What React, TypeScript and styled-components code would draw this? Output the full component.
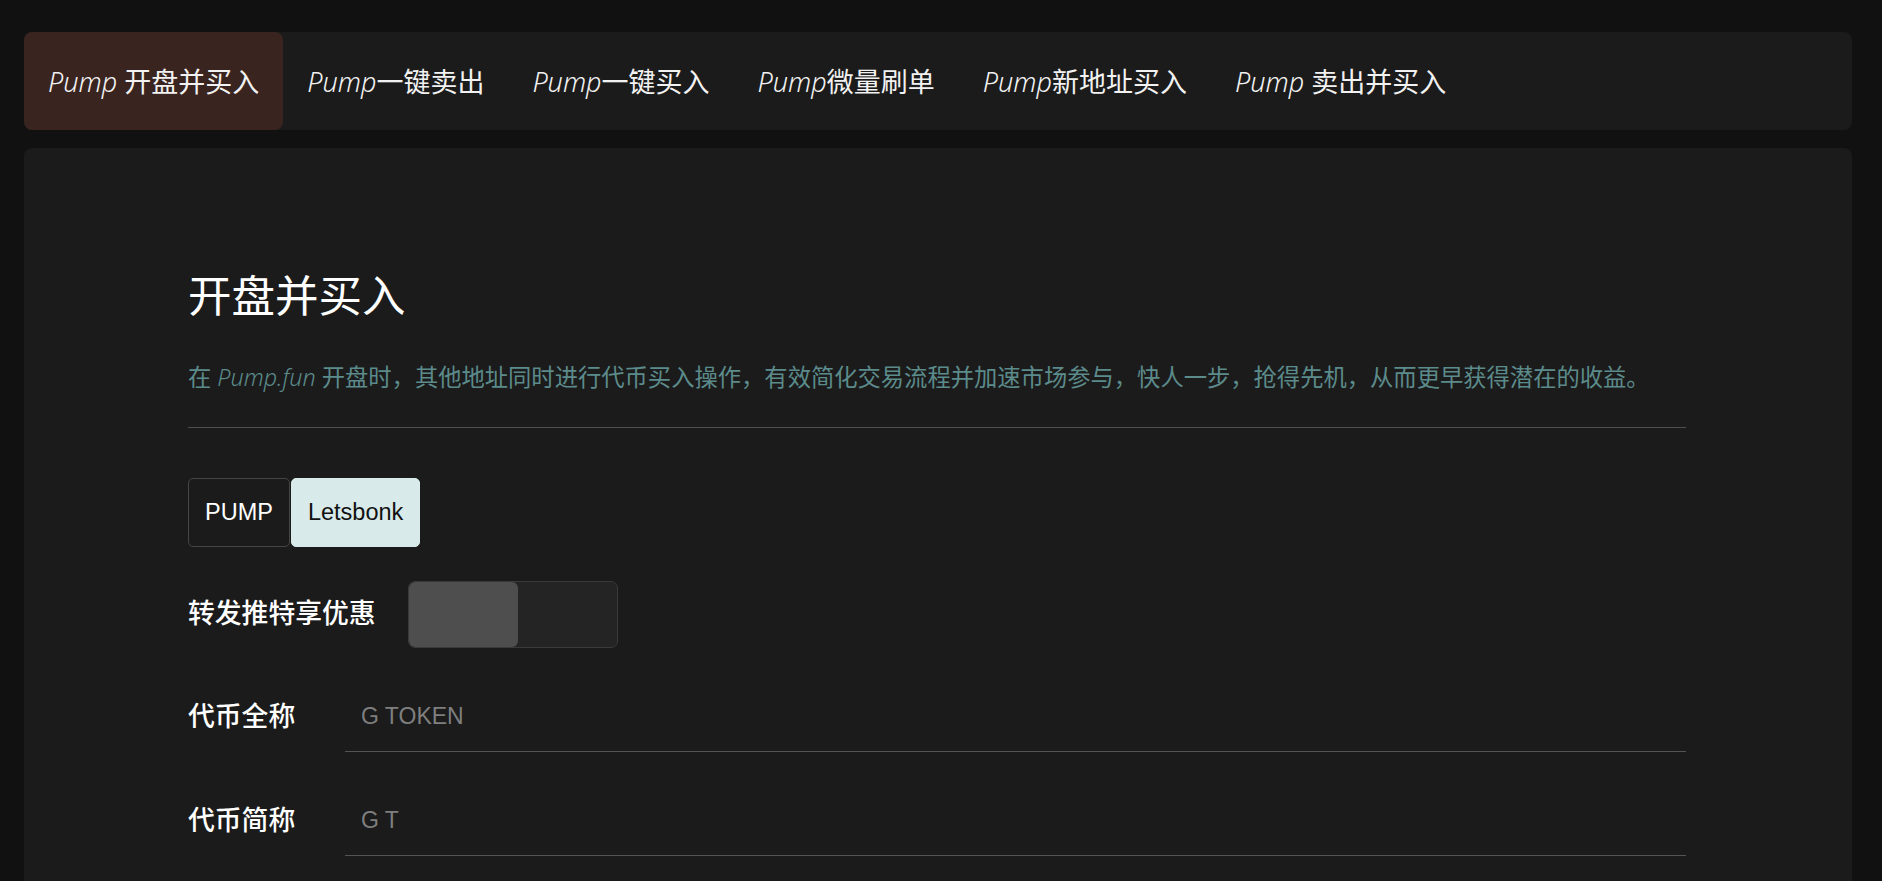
import React, { useState } from "react";
import styled, { createGlobalStyle } from "styled-components";

const GlobalStyle = createGlobalStyle`
  html, body {
    margin: 0;
    padding: 0;
    background: #111111;
  }
  body {
    font-family: "Noto Sans", "Noto Sans CJK SC", sans-serif;
    color: #ffffff;
  }
  * { box-sizing: border-box; }
`;

const Page = styled.div`
  padding: 32px 30px 0 24px;
  min-height: 881px;
`;

const TabBar = styled.nav`
  display: flex;
  align-items: stretch;
  height: 98px;
  background: #1b1b1b;
  border-radius: 8px;
`;

const Tab = styled.button<{ $active?: boolean }>`
  display: flex;
  align-items: center;
  padding: 0 24px 0 24px;
  border: none;
  border-radius: 8px;
  background: ${(p) => (p.$active ? "#392420" : "transparent")};
  color: #f2f2f2;
  font-family: "Noto Sans", "Noto Sans CJK SC", sans-serif;
  font-size: 27px;
  line-height: 1;
  cursor: pointer;
  white-space: pre;
  em { font-style: italic; font-weight: 300; }
`;

const Panel = styled.main`
  margin-top: 18px;
  background: #1b1b1b;
  border-radius: 8px;
  padding: 119px 166px 140px 164px;
`;

const Heading = styled.h1`
  margin: 0;
  font-family: "Noto Sans CJK SC", sans-serif;
  font-size: 43.5px;
  line-height: 53px;
  font-weight: 400;
  color: #ffffff;
`;

const Description = styled.p`
  margin: 39px 0 0;
  font-family: "Noto Sans", "Noto Sans CJK SC", sans-serif;
  font-size: 23.3px;
  line-height: 36px;
  color: #5b8b8b;
  em { font-style: italic; font-weight: 300; }
`;

const Divider = styled.hr`
  margin: 32px 0 0;
  border: none;
  border-top: 1px solid #4e4e4e;
`;

const Form = styled.div`
  margin-top: 50px;
  display: flex;
  flex-direction: column;
  gap: 34px;
`;

const Segment = styled.div`
  display: flex;
  gap: 1px;
`;

const SegButton = styled.button<{ $active?: boolean }>`
  height: 69px;
  padding: 0 16px;
  border: 1px solid ${(p) => (p.$active ? "#d8ebea" : "#454545")};
  border-radius: 5px;
  background: ${(p) => (p.$active ? "#d8ebea" : "transparent")};
  color: ${(p) => (p.$active ? "#111111" : "#ffffff")};
  font-family: "Liberation Sans", Arial, sans-serif;
  font-size: 23.5px;
  cursor: pointer;
`;

const Row = styled.div`
  display: flex;
  align-items: center;
`;

const Label = styled.label<{ $width?: number }>`
  flex: none;
  width: ${(p) => (p.$width ? `${p.$width}px` : "auto")};
  margin-right: ${(p) => (p.$width ? "0" : "32px")};
  padding-bottom: 6px;
  font-family: "Liberation Sans", "Noto Sans CJK SC", sans-serif;
  font-size: 26.8px;
  font-weight: 500;
  color: #ffffff;
`;

const Toggle = styled.button<{ $on?: boolean }>`
  display: flex;
  justify-content: ${(p) => (p.$on ? "flex-end" : "flex-start")};
  width: 210px;
  height: 67px;
  padding: 0;
  border: 1px solid #3a3a3a;
  border-radius: 7px;
  background: #242424;
  cursor: pointer;
  overflow: hidden;
`;

const Knob = styled.span`
  width: 109px;
  height: 100%;
  border-radius: 6px;
  background: #4e4e4e;
`;

const Input = styled.input`
  flex: 1;
  height: 70px;
  padding: 0 16px;
  border: none;
  border-bottom: 1px solid #545454;
  background: transparent;
  color: #ffffff;
  font-family: "Liberation Sans", Arial, sans-serif;
  font-size: 23px;
  outline: none;
  &::placeholder { color: #7f7f7f; }
`;

const tabs = [
  ["Pump", " 开盘并买入"],
  ["Pump", "一键卖出"],
  ["Pump", "一键买入"],
  ["Pump", "微量刷单"],
  ["Pump", "新地址买入"],
  ["Pump", " 卖出并买入"],
];

export default function App() {
  const [active, setActive] = useState(0);
  const [platform, setPlatform] = useState("Letsbonk");
  const [share, setShare] = useState(false);
  return (
    <>
      <GlobalStyle />
      <Page>
        <TabBar>
          {tabs.map(([a, b], i) => (
            <Tab key={i} $active={i === active} onClick={() => setActive(i)}>
              <em>{a}</em>
              {b}
            </Tab>
          ))}
        </TabBar>
        <Panel>
          <Heading>开盘并买入</Heading>
          <Description>
            在 <em>Pump.fun</em> 开盘时，其他地址同时进行代币买入操作，有效简化交易流程并加速市场参与，快人一步，抢得先机，从而更早获得潜在的收益。
          </Description>
          <Divider />
          <Form>
            <Segment>
              {["PUMP", "Letsbonk"].map((p) => (
                <SegButton key={p} $active={platform === p} onClick={() => setPlatform(p)}>
                  {p}
                </SegButton>
              ))}
            </Segment>
            <Row>
              <Label>转发推特享优惠</Label>
              <Toggle $on={share} onClick={() => setShare(!share)}>
                <Knob />
              </Toggle>
            </Row>
            <Row>
              <Label $width={157}>代币全称</Label>
              <Input placeholder="G TOKEN" />
            </Row>
            <Row>
              <Label $width={157}>代币简称</Label>
              <Input placeholder="G T" />
            </Row>
          </Form>
        </Panel>
      </Page>
    </>
  );
}
